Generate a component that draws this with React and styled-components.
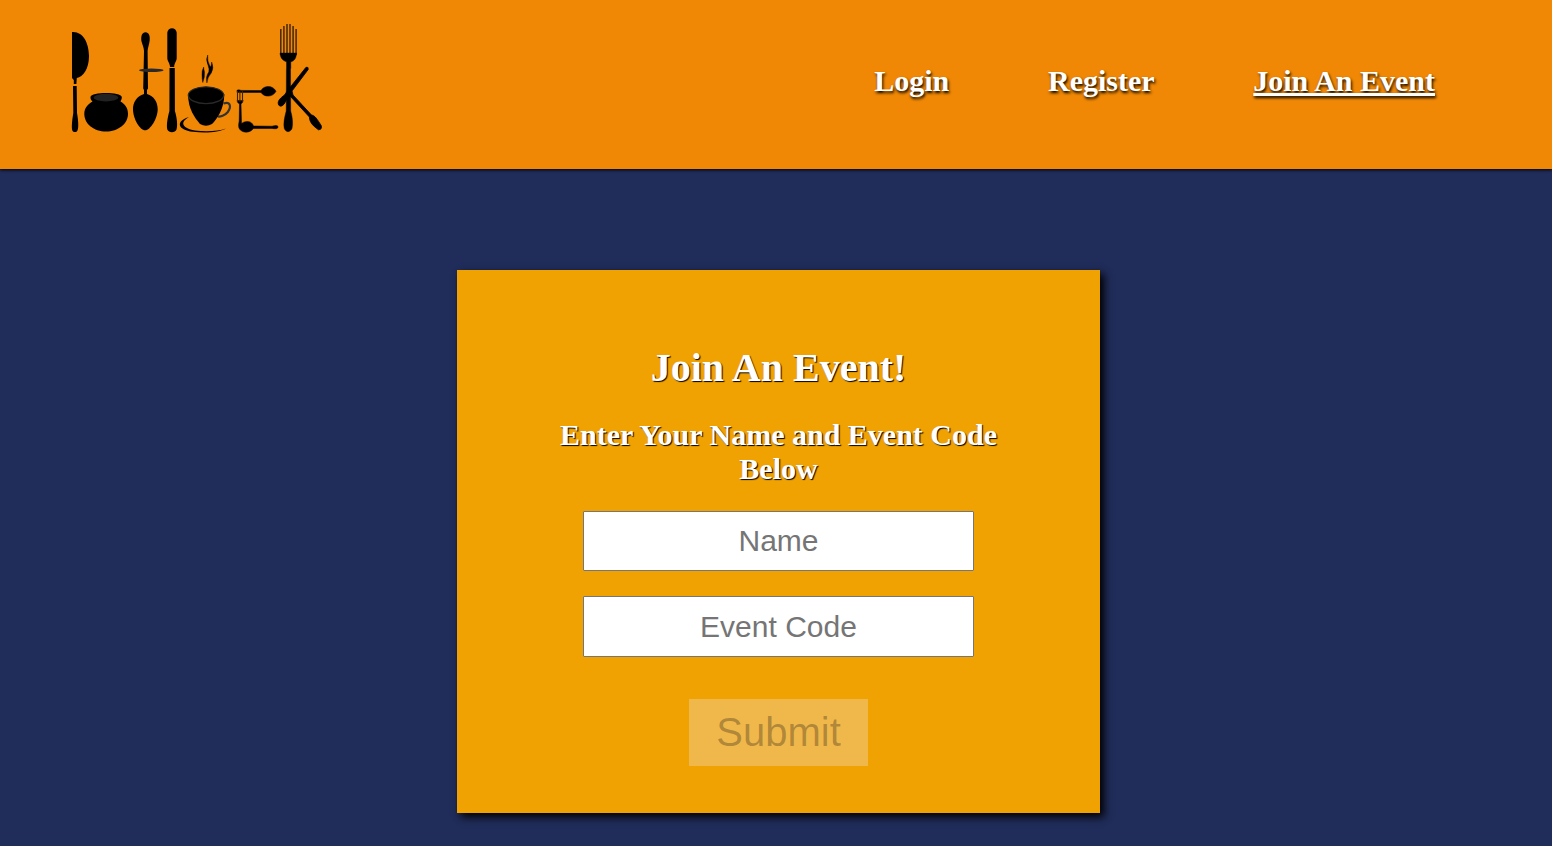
import React from "react";
import styled, { createGlobalStyle } from "styled-components";

const GlobalStyle = createGlobalStyle`
  * { box-sizing: border-box; }
  body {
    margin: 0;
    background: #202c59;
    font-family: "Liberation Serif", "Times New Roman", serif;
    overflow: hidden;
  }
`;

const Page = styled.div`
  display: flex;
  flex-direction: column;
  min-height: 846px;
`;

const Header = styled.header`
  display: flex;
  justify-content: space-between;
  align-items: flex-start;
  height: 169px;
  padding: 23px 117px 0 71px;
  background: #f18805;
  box-shadow: 0 1px 3px #000;
`;

const LogoArt = styled.svg`
  display: block;
  width: 252px;
  height: 112px;
`;

const Nav = styled.nav`
  display: flex;
  gap: 98.7px;
  padding-top: 41px;
`;

const NavLink = styled.a`
  color: #fff;
  font-size: 30px;
  font-weight: bold;
  line-height: 34px;
  text-shadow: 1px 2px 3px #000;
  text-decoration: ${(p) => (p.$active ? "underline" : "none")};
  text-decoration-thickness: 3px;
  text-underline-offset: 2px;
  cursor: pointer;
`;

const Card = styled.form`
  display: flex;
  flex-direction: column;
  align-items: center;
  width: 643px;
  height: 543px;
  margin: 101px 0 0 457px;
  padding: 75px 100px 0;
  background: #f0a202;
  box-shadow: 4px 4px 8px #000;
`;

const Title = styled.h1`
  margin: 0;
  color: #fff;
  font-size: 40px;
  line-height: 45px;
  text-shadow: 1px 1px 1px #000;
`;

const Subtitle = styled.h2`
  margin: 28px 0 25px;
  color: #fff;
  font-size: 30px;
  line-height: 34px;
  text-align: center;
  text-shadow: 1px 1px 1px #000;
`;

const Field = styled.input`
  width: 391px;
  height: ${(p) => p.$height}px;
  margin-bottom: 25px;
  padding: 0;
  border: 1px solid #767676;
  border-radius: 1px;
  background: #fff;
  font: 30px "Liberation Sans", Arial, sans-serif;
  text-align: center;
  &::placeholder { color: #757575; opacity: 1; }
`;

const SubmitButton = styled.button`
  width: 179px;
  height: 67px;
  margin-top: 17px;
  padding: 0;
  border: 0;
  background: #f0b84a;
  color: rgba(16, 16, 16, 0.3);
  font: 40px "Liberation Sans", Arial, sans-serif;
`;

function Logo() {
  return (
    <LogoArt viewBox="71 23 252 112" role="img" aria-label="Potluck">
      {/* knife and its handle */}
      <path d="M72 32C83 31 89 43 89 56C89 69 83 77 76.8 78L76.4 84H73.8V80L72 78Z" />
      <path d="M73 86H76.7L77 113C78.5 121 79 130 76.8 131.5Q75 132.5 73 131.5C71 130 72 121 73.3 113Z" />
      {/* cooking pot */}
      <path d="M90.5 97C91 91.8 121 91.8 121.8 97C122 99 121 100 120.5 101.5C125 104 128 108 128 114C128 124 118 131.5 106 131.5C94 131.5 84.3 124 84.3 114C84.3 108 88 104 92.5 101.5C91 100 90.3 99 90.5 97Z" />
      <ellipse cx="106" cy="97.6" rx="12.3" ry="3.8" fill="#222" />
      {/* upright spoon with crossbar */}
      <path d="M145.5 32.2C149 32.2 150.3 36 149.6 41C149.2 44 147.8 48 147.6 51L148 88.5L147 90V94C154 96 157.7 102 157.7 109C157.7 119 150 130.3 145.3 130.3C140 130.3 133 119 133 109C133 102 137 96 144 94V90L143.2 88.5L144 51C144 48 142.2 44 141.4 41C140.8 36 142 32.2 145.5 32.2Z" />
      <ellipse cx="151.3" cy="70.2" rx="12.3" ry="1.8" fill="#292929" />
      {/* tall knife handle */}
      <path d="M167.3 32.5C168 26.8 176 26.8 176.7 32.5V58C176.7 61.5 174.2 63 174.2 67H170C170 63 167.3 61.5 167.3 58Z" />
      <path d="M169.5 68H174.8L174.9 111C177 118 177.8 125 176.5 129.5C175 133 169 133 167.3 129.5C166.3 125 167.5 118 169.4 111Z" />
      {/* cup, saucer and steam */}
      <path d="M189 117C175.5 121 177 130 193 131.8C207 133.6 219 132 226 128.5C219 131 207 132 195 130.5C181.5 128 180 122 189 117Z" />
      <path d="M223.5 103.5C230.5 101 231.5 107 227.8 112C225 115.5 220 117 218 116.5" fill="none" stroke="#333" strokeWidth="2.2" />
      <path d="M188 94C188 109 195 118 200 124Q206 127.5 212 124C217 119 224.3 109 224.3 94Z" />
      <ellipse cx="206" cy="95.2" rx="17.7" ry="8.4" stroke="#292929" strokeWidth="1.3" />
      <path stroke="#000" strokeWidth=".4" d="M203.7 67Q201.5 71 202 75Q202 79 202.8 82.5Q205 77 204.5 72Q203.7 69 203.7 67ZM207.7 55Q205.5 60 208 65Q209.5 69 208.8 72Q205.5 76 206.9 83Q207.5 77 211.3 73Q214.2 68 211.7 62Q211.3 67 210.2 66.5Q207 61 207.7 55Z" />
      {/* small fork and two spoons */}
      <g stroke="#000" strokeWidth=".5">
        <path d="M237 90.2Q239 89.4 241 90.4L261 90.6C264 85 273 85 276 91.3C273 97.5 264 97.5 261 92.4L241 92.4H237Z" />
        <path d="M237 100.5H243.2Q242.8 103 241 103.8L241.5 123.5C246 120 252 121 253.5 126L272 126.2Q278 124.5 278 127Q278 129.5 272 128.4L253.5 128.5C250 133.5 242 133 239.5 129C238 127 238.8 123 239.2 121L239.5 103.8Q237.3 103 237 100.5Z" />
      </g>
      <path d="M237.5 91V102M239.9 91V102M242.5 91V102" stroke="#3c2204" strokeWidth="1.1" fill="none" />
      {/* large fork */}
      <path d="M280.8 29V55M283.9 26V55M287 24V55M290 24V55M293.1 26V55M296.1 29V55" stroke="#442708" strokeWidth="1.5" fill="none" />
      <path stroke="#000" strokeWidth=".4" d="M280 53H296.6C296.3 58 294.5 61 290.8 61.8V68L290.5 69.5L290.7 111C292.5 117 293.2 124 292 128.5C290 132.7 286 132.7 284.3 128.5C283.2 124 284.5 117 286.2 111L286.4 69.5L286.5 68V61.8C282.5 60.5 280.4 58 280 53Z" />
      {/* crossed utensils */}
      <path stroke="#000" strokeWidth=".8" strokeLinejoin="round" d="M306 67.3Q308.8 66.5 308.2 69.5L292 91L293 95L311.5 115C315 115.5 317 119 321.2 125.5Q322.5 129.5 318.5 129.8C314 126.5 309.5 123 309.4 117L290 96L288 97L284.8 103C282.5 107 279 107 278.3 104C277.6 100.5 280.5 98 284.5 95L288 90Z" />
    </LogoArt>
  );
}

export default function App() {
  return (
    <Page>
      <GlobalStyle />
      <Header>
        <Logo />
        <Nav>
          <NavLink>Login</NavLink>
          <NavLink>Register</NavLink>
          <NavLink $active>Join An Event</NavLink>
        </Nav>
      </Header>
      <Card>
        <Title>Join An Event!</Title>
        <Subtitle>Enter Your Name and Event Code Below</Subtitle>
        <Field placeholder="Name" $height={60} />
        <Field placeholder="Event Code" $height={61} />
        <SubmitButton type="button" disabled>Submit</SubmitButton>
      </Card>
    </Page>
  );
}
